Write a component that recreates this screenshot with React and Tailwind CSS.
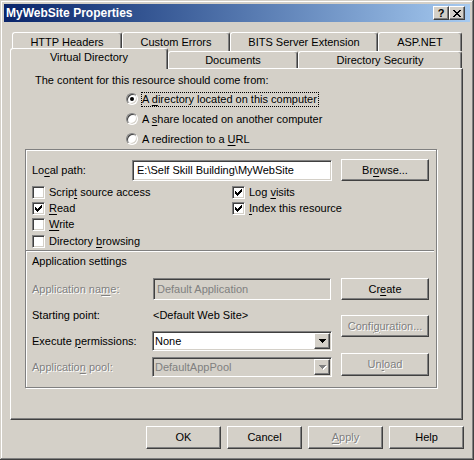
import React from 'react';

// estilos clásicos de Windows
const raised = 'border border-t-white border-l-white border-r-[#404040] border-b-[#404040] shadow-[inset_-1px_-1px_0_#808080] bg-[#d4d0c8]';
const sunken = 'border border-t-[#808080] border-l-[#808080] border-r-white border-b-white shadow-[inset_1px_1px_0_#404040,inset_-1px_-1px_0_#d4d0c8]';
const etched = 'border border-[#808080] shadow-[inset_1px_1px_0_#fff,1px_1px_0_#fff]';
const disabledText = 'text-[#808080] [text-shadow:1px_1px_0_#fff]';

const U = ({ children }) => <span className="underline decoration-1 underline-offset-[2px]">{children}</span>;

const Button = ({ children, disabled, className = '' }) => (
  <div className={`${raised} flex items-center justify-center ${disabled ? disabledText : ''} ${className}`}>
    {children}
  </div>
);

const Radio = ({ checked, focused, children }) => (
  <div className="flex h-[20px] items-center gap-[3px]">
    <div className={`w-[12px] h-[12px] rounded-full bg-white ${sunken} flex items-center justify-center`}>
      {checked && <div className="w-[4px] h-[4px] rounded-full bg-black"></div>}
    </div>
    <span className={`border pr-[1px] ${focused ? 'border-dotted border-black' : 'border-transparent'}`}>{children}</span>
  </div>
);

const Check = () => (
  <svg width="7" height="7" viewBox="0 0 7 7" shapeRendering="crispEdges">
    <rect x="0" y="2" width="1" height="3" fill="#000" />
    <rect x="1" y="3" width="1" height="3" fill="#000" />
    <rect x="2" y="4" width="1" height="3" fill="#000" />
    <rect x="3" y="3" width="1" height="3" fill="#000" />
    <rect x="4" y="2" width="1" height="3" fill="#000" />
    <rect x="5" y="1" width="1" height="3" fill="#000" />
    <rect x="6" y="0" width="1" height="3" fill="#000" />
  </svg>
);

const Checkbox = ({ checked, children, className = '' }) => (
  <div className={`flex h-[16px] items-center gap-[4px] ${className}`}>
    <div className={`w-[13px] h-[13px] bg-white ${sunken} flex items-center justify-center`}>
      {checked && <Check />}
    </div>
    <span>{children}</span>
  </div>
);

const Arrow = ({ disabled }) => (
  <svg width="7" height="4" viewBox="0 0 7 4" shapeRendering="crispEdges" className={disabled ? 'drop-shadow-[1px_1px_0_#fff]' : ''}>
    <polygon points="0,0 7,0 3.5,4" fill={disabled ? '#808080' : '#000'} />
  </svg>
);

const Select = ({ value, disabled }) => (
  <div className={`w-[180px] h-[20px] p-[1px] flex ${sunken} ${disabled ? 'bg-[#d4d0c8]' : 'bg-white'}`}>
    <div className={`flex-1 flex items-center pl-[1px] ${disabled ? 'text-[#808080]' : ''}`}>{value}</div>
    <div className={`${raised} w-[16px] h-[16px] flex items-center justify-center`}>
      <Arrow disabled={disabled} />
    </div>
  </div>
);

const CloseGlyph = () => (
  <svg width="8" height="7" viewBox="0 0 8 7" shapeRendering="crispEdges">
    <rect x="0" y="0" width="2" height="1" fill="#000" />
    <rect x="6" y="0" width="2" height="1" fill="#000" />
    <rect x="1" y="1" width="2" height="1" fill="#000" />
    <rect x="5" y="1" width="2" height="1" fill="#000" />
    <rect x="2" y="2" width="4" height="1" fill="#000" />
    <rect x="3" y="3" width="2" height="1" fill="#000" />
    <rect x="2" y="4" width="4" height="1" fill="#000" />
    <rect x="1" y="5" width="2" height="1" fill="#000" />
    <rect x="5" y="5" width="2" height="1" fill="#000" />
    <rect x="0" y="6" width="2" height="1" fill="#000" />
    <rect x="6" y="6" width="2" height="1" fill="#000" />
  </svg>
);

const tabBase = 'border-t border-l border-r border-t-white border-l-white border-r-[#404040] shadow-[inset_-1px_0_0_#808080] rounded-t-[3px] bg-[#d4d0c8] flex justify-center';

const App = () => {
  const backTabs = [
    { label: 'HTTP Headers', w: 'w-[110px]' },
    { label: 'Custom Errors', w: 'w-[108px]' },
    { label: 'BITS Server Extension', w: 'w-[148px]' },
    { label: 'ASP.NET', w: 'w-[84px]' },
  ];

  return (
    <div className="w-[474px] h-[460px] overflow-hidden bg-[#d4d0c8] p-[4px] shadow-[inset_-1px_-1px_0_#404040,inset_1px_1px_0_#d4d0c8,inset_-2px_-2px_0_#808080,inset_2px_2px_0_#fff] text-[11px] leading-[13px] text-black [font-family:'Liberation_Sans',Arial,sans-serif]">
      {/* barra de título */}
      <div className="h-[18px] flex items-center pl-[2px] pr-[5px] bg-linear-to-r from-[#0a246a] to-[#a6caf0]">
        <span className="text-white font-bold text-[12px] flex-1">MyWebSite Properties</span>
        <div className={`${raised} w-[16px] h-[14px] flex items-center justify-center font-bold text-[11px] leading-[11px]`}>?</div>
        <div className={`${raised} w-[16px] h-[14px] flex items-center justify-center`}>
          <CloseGlyph />
        </div>
      </div>

      {/* pestañas */}
      <div className="mt-[10px] flex h-[19px] ml-[8px]">
        {backTabs.map((t) => (
          <div key={t.label} className={`${tabBase} ${t.w} pt-[3px]`}>{t.label}</div>
        ))}
      </div>
      <div className="flex items-end h-[17px] ml-[6px]">
        <div className={`${tabBase} w-[158px] h-[21px] mb-[-1px] relative z-10 pt-[2px]`}>Virtual Directory</div>
        <div className={`${tabBase} w-[130px] h-[17px] pt-[2px]`}>Documents</div>
        <div className={`${tabBase} w-[164px] h-[17px] pt-[2px]`}>Directory Security</div>
      </div>

      {/* panel */}
      <div className="ml-[6px] w-[453px] h-[352px] border border-t-white border-l-white border-r-[#404040] border-b-[#404040] shadow-[inset_-1px_-1px_0_#808080]">
        <div className="mt-[5px] ml-[24px]">The content for this resource should come from:</div>
        <div className="mt-[2px] ml-[115px] flex flex-col">
          <Radio checked focused>A <U>d</U>irectory located on this computer</Radio>
          <Radio>A <U>s</U>hare located on another computer</Radio>
          <Radio>A redirection to a <U>U</U>RL</Radio>
        </div>

        <div className={`ml-[14px] w-[412px] h-[239px] ${etched}`}>
          <div className="mt-[9px] flex items-center h-[22px] pl-[6px]">
            <div className="w-[100px]">Lo<U>c</U>al path:</div>
            <div className={`w-[200px] h-[21px] bg-white ${sunken} flex items-center pl-[4px]`}>
              {'E:\\Self Skill Building\\MyWebSite'}
            </div>
            <Button className="ml-[9px] w-[88px] h-[22px]">Br<U>o</U>wse...</Button>
          </div>

          <div className="mt-[3px] pl-[6px] flex">
            <div className="w-[200px] flex flex-col">
              <Checkbox>Scrip<U>t</U> source access</Checkbox>
              <Checkbox checked><U>R</U>ead</Checkbox>
              <Checkbox><U>W</U>rite</Checkbox>
              <Checkbox className="mt-[1px]">Directory <U>b</U>rowsing</Checkbox>
            </div>
            <div className="flex flex-col">
              <Checkbox checked>Log <U>v</U>isits</Checkbox>
              <Checkbox checked><U>I</U>ndex this resource</Checkbox>
            </div>
          </div>

          <div className="mt-[1px] mr-[2px] h-[2px] border-t border-t-[#808080] border-b border-b-white"></div>

          <div className="h-[18px] flex items-center pl-[6px]">Application settings</div>

          <div className="mt-[8px] flex">
            <div className="pl-[6px] flex flex-col">
              <div className="h-[22px] flex items-center">
                <div className={`w-[121px] ${disabledText}`}>Application na<U>m</U>e:</div>
                <div className={`w-[178px] h-[22px] bg-[#d4d0c8] ${sunken} flex items-center pl-[3px] text-[#808080]`}>Default Application</div>
              </div>
              <div className="mt-[5px] h-[20px] flex items-center">
                <div className="w-[121px]">Starting point:</div>
                <div>&lt;Default Web Site&gt;</div>
              </div>
              <div className="mt-[6px] h-[20px] flex items-center">
                <div className="w-[120px]">Execute <U>p</U>ermissions:</div>
                <Select value="None" />
              </div>
              <div className="mt-[6px] h-[20px] flex items-center">
                <div className={`w-[120px] ${disabledText}`}>Applicatio<U>n</U> pool:</div>
                <Select value="DefaultAppPool" disabled />
              </div>
            </div>
            <div className="ml-[9px] flex flex-col">
              <Button className="w-[88px] h-[22px]">Cr<U>e</U>ate</Button>
              <Button disabled className="mt-[15px] w-[88px] h-[22px]">Confi<U>g</U>uration...</Button>
              <Button disabled className="mt-[16px] w-[88px] h-[23px]">Un<U>l</U>oad</Button>
            </div>
          </div>
        </div>
      </div>

      {/* botones inferiores */}
      <div className="mt-[6px] mr-[6px] flex justify-end gap-[6px]">
        <Button className="w-[75px] h-[23px]">OK</Button>
        <Button className="w-[75px] h-[23px]">Cancel</Button>
        <Button disabled className="w-[75px] h-[23px]"><U>A</U>pply</Button>
        <Button className="w-[75px] h-[23px]">Help</Button>
      </div>
    </div>
  );
};

export default App;
